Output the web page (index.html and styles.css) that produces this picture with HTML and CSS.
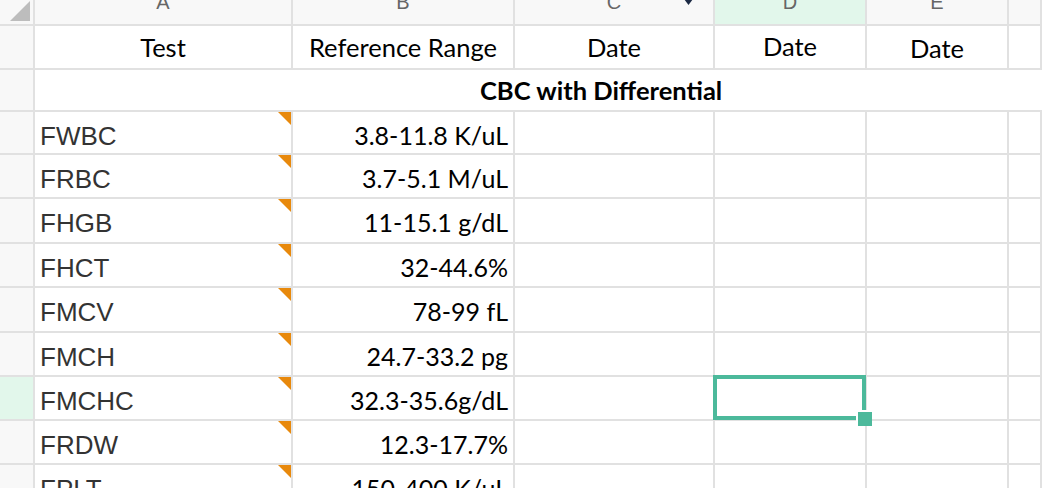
FILE: index.html
```html
<!DOCTYPE html>
<html>
<head>
<meta charset="utf-8">
<link rel="stylesheet" href="styles.css">
</head>
<body>
<div class="sheet">
  <div class="c rh corner"><span class="corner-tri"></span></div>
  <div class="c ch">A</div>
  <div class="c ch">B</div>
  <div class="c ch ch-filter">C<span class="filter-arrow"></span></div>
  <div class="c ch ch-active">D</div>
  <div class="c ch">E</div>
  <div class="c ch"></div>

  <div class="c rh"></div>
  <div class="c hd">Test</div>
  <div class="c hd">Reference Range</div>
  <div class="c hd">Date</div>
  <div class="c hd hd-up">Date</div>
  <div class="c hd hd-down">Date</div>
  <div class="c"></div>

  <div class="c rh"></div>
  <div class="c section">CBC with Differential</div>

  <div class="c rh"></div>
  <div class="c test">FWBC</div>
  <div class="c range">3.8-11.8 K/uL</div>
  <div class="c"></div><div class="c"></div><div class="c"></div><div class="c"></div>

  <div class="c rh"></div>
  <div class="c test">FRBC</div>
  <div class="c range">3.7-5.1 M/uL</div>
  <div class="c"></div><div class="c"></div><div class="c"></div><div class="c"></div>

  <div class="c rh"></div>
  <div class="c test">FHGB</div>
  <div class="c range">11-15.1 g/dL</div>
  <div class="c"></div><div class="c"></div><div class="c"></div><div class="c"></div>

  <div class="c rh"></div>
  <div class="c test">FHCT</div>
  <div class="c range">32-44.6%</div>
  <div class="c"></div><div class="c"></div><div class="c"></div><div class="c"></div>

  <div class="c rh"></div>
  <div class="c test">FMCV</div>
  <div class="c range">78-99 fL</div>
  <div class="c"></div><div class="c"></div><div class="c"></div><div class="c"></div>

  <div class="c rh"></div>
  <div class="c test">FMCH</div>
  <div class="c range">24.7-33.2 pg</div>
  <div class="c"></div><div class="c"></div><div class="c"></div><div class="c"></div>

  <div class="c rh rh-active"></div>
  <div class="c test">FMCHC</div>
  <div class="c range">32.3-35.6g/dL</div>
  <div class="c"></div>
  <div class="c selected"><span class="sel-box"></span><span class="sel-handle"></span></div>
  <div class="c"></div><div class="c"></div>

  <div class="c rh"></div>
  <div class="c test">FRDW</div>
  <div class="c range">12.3-17.7%</div>
  <div class="c"></div><div class="c"></div><div class="c"></div><div class="c"></div>

  <div class="c rh"></div>
  <div class="c test">FPLT</div>
  <div class="c range">150-400 K/uL</div>
  <div class="c"></div><div class="c"></div><div class="c"></div><div class="c"></div>
</div>
</body>
</html>
```

FILE: styles.css
```css
html, body {
  margin: 0;
  padding: 0;
  background: #ffffff;
  overflow: hidden;
}

.sheet {
  display: grid;
  grid-template-columns: 35px 258px 222px 200px 152px 142px 33px;
  grid-template-rows: 38px 44px 42px 43px 44px 45px 44px 45px 44px 44px 44px 44px;
  margin-top: -12px;
  width: 1042px;
  overflow: hidden;
}

.c {
  box-sizing: border-box;
  border-right: 2px solid #e1e1e1;
  border-bottom: 2px solid #e1e1e1;
  background: #ffffff;
  position: relative;
  min-width: 0;
}

.rh {
  background: #f8f8f8;
}

.rh-active {
  background: #e2f7eb;
}

.corner {
  display: flex;
  justify-content: flex-end;
  align-items: flex-end;
  padding: 0 3px 3px 0;
}

.corner-tri {
  display: block;
  width: 20px;
  height: 20px;
  background: #bdbdbd;
  clip-path: polygon(100% 0, 100% 100%, 0 100%);
}

.ch {
  background: #f8f8f8;
  font-family: "Liberation Sans", Arial, sans-serif;
  font-size: 20px;
  line-height: 20px;
  color: #666666;
  text-align: center;
  padding-top: 4px;
}

.ch-active {
  background: #e2f7eb;
}

.filter-arrow {
  position: absolute;
  top: 11px;
  right: 20px;
  width: 9px;
  height: 6px;
  background: #1c2a44;
  clip-path: polygon(0 0, 100% 0, 50% 100%);
}

.hd {
  font-family: Lato, "Open Sans", sans-serif;
  font-size: 25.5px;
  line-height: 42px;
  color: #000000;
  text-align: center;
}

.hd-up {
  line-height: 41px;
}

.hd-down {
  line-height: 44px;
}

.section {
  grid-column: 2 / -1;
  font-family: Lato, "Open Sans", sans-serif;
  font-weight: 700;
  font-size: 25.5px;
  line-height: 40px;
  color: #000000;
  text-align: left;
  padding-left: 445px;
  white-space: nowrap;
  overflow: hidden;
  border-right: none;
}

.test {
  font-family: "Liberation Sans", Arial, sans-serif;
  font-size: 26px;
  color: #333333;
  line-height: 42px;
  padding: 3px 0 0 5px;
}

.test::after {
  content: "";
  position: absolute;
  top: 0;
  right: 0;
  width: 13px;
  height: 13px;
  background: #e8890c;
  clip-path: polygon(0 0, 100% 0, 100% 100%);
}

.range {
  font-family: Lato, "Open Sans", sans-serif;
  font-size: 25px;
  color: #000000;
  line-height: 42px;
  padding: 2px 5px 0 0;
  text-align: right;
}

.selected {
  z-index: 2;
}

.sel-box {
  position: absolute;
  top: -2px;
  left: -2px;
  right: -1px;
  bottom: -1px;
  border: 4px solid #4cb99b;
  box-sizing: border-box;
}

.sel-handle {
  position: absolute;
  width: 14px;
  height: 14px;
  right: -7px;
  bottom: -7px;
  background: #4cb99b;
  box-shadow: -2px -2px 0 0 #ffffff;
}
```
